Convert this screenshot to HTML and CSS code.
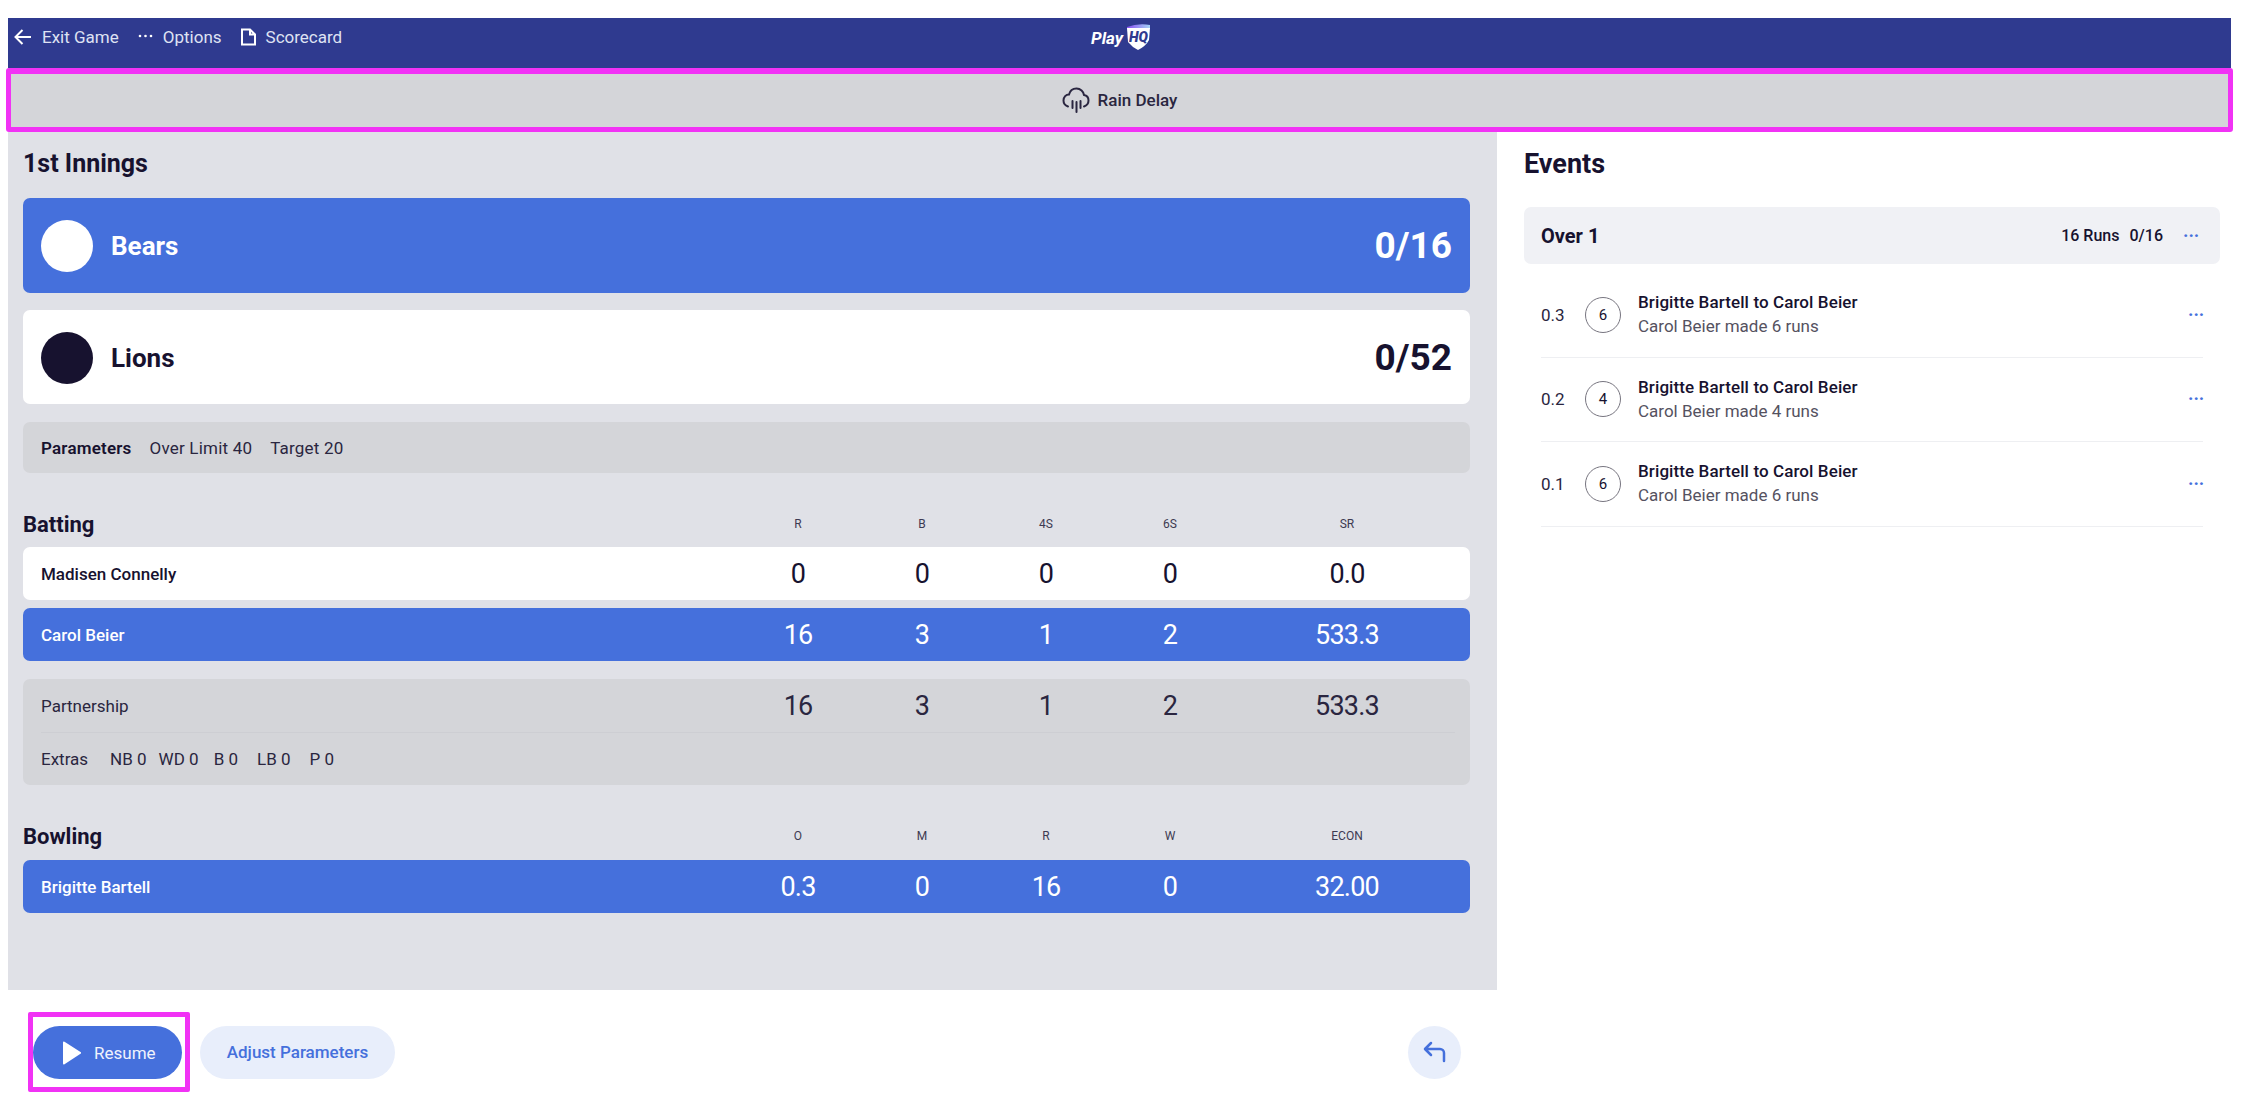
FILE: index.html
```html
<!DOCTYPE html>
<html lang="en">

<head>
    <meta charset="UTF-8">
    <title>Scoring</title>
    <link rel="stylesheet" href="styles.css">
</head>

<body>
    <div class="app">
        <header class="topbar">
            <nav class="topnav">
                <a class="navitem">
                    <svg class="navicon" width="18" height="18" viewBox="0 0 18 18"><path d="M17 9H1.500M8.500 2L1.500 9l7 7" /></svg>
                    Exit Game
                </a>
                <a class="navitem">
                    <svg class="navicon" width="15" height="18" viewBox="0 0 15 18"><circle cx="2" cy="8" r="1.3" /><circle cx="7.500" cy="8" r="1.3" /><circle cx="13" cy="8" r="1.3" /></svg>
                    Options
                </a>
                <a class="navitem">
                    <svg class="navicon" width="15" height="18" viewBox="0 0 15 18"><path d="M1 1.500h8l5 5V16.500H1zM9 1.500v5h5" /></svg>
                    Scorecard
                </a>
            </nav>
            <div class="logo">
                <span class="logo-play">Play</span>
                <svg class="logo-shield" width="27" height="28" viewBox="0 0 27 28">
                    <defs>
                        <linearGradient id="shieldtop" x1="0" y1="0" x2="1" y2="0">
                            <stop offset="0" stop-color="#8a4ff0" />
                            <stop offset="1" stop-color="#a5d4f7" />
                        </linearGradient>
                    </defs>
                    <path d="M3 4Q14 0 26 2L26 6H3z" fill="url(#shieldtop)" />
                    <path d="M3 5H26L25 17Q22 23 14 27Q8 24 4 19z" fill="#fff" />
                </svg>
                <span class="logo-hq">HQ</span>
            </div>
        </header>

        <div class="delay">
            <svg class="delay-icon" width="28" height="28" viewBox="0 0 28 28"><path d="M6 20.500C3 19.500 1.500 17 1.500 14.500C1.500 11 4 8.500 7 8.500C8 4.500 11 2.500 14.500 2.500C18.500 2.500 21.500 5.500 22 9C25 9.500 26.500 12 26.500 14.500C26.500 17 25 19.500 22 20.500M10.500 15v7M14.500 16v10M18.500 15v7" /></svg>
            Rain Delay
        </div>

        <div class="columns">
            <div class="leftcol">
                <main class="game">
                    <h2 class="innings">1st Innings</h2>

                    <div class="team team-active">
                        <span class="badge badge-white"></span>
                        <span class="team-name">Bears</span>
                        <span class="team-score">0/16</span>
                    </div>
                    <div class="team team-plain">
                        <span class="badge badge-dark"></span>
                        <span class="team-name">Lions</span>
                        <span class="team-score">0/52</span>
                    </div>

                    <div class="params">
                        <b>Parameters</b>
                        <span>Over Limit 40</span>
                        <span>Target 20</span>
                    </div>

                    <div class="stat-head stat-head-batting">
                        <h3>Batting</h3>
                        <span>R</span><span>B</span><span>4S</span><span>6S</span><span>SR</span>
                    </div>
                    <div class="stat-row row-white">
                        <div class="player">Madisen Connelly</div>
                        <span>0</span><span>0</span><span>0</span><span>0</span><span>0.0</span>
                    </div>
                    <div class="stat-row row-blue">
                        <div class="player">Carol Beier</div>
                        <span>16</span><span>3</span><span>1</span><span>2</span><span>533.3</span>
                    </div>

                    <div class="partner">
                        <div class="stat-row partner-row">
                            <div class="partner-name">Partnership</div>
                            <span>16</span><span>3</span><span>1</span><span>2</span><span>533.3</span>
                        </div>
                        <div class="extras">
                            <span class="ex-label">Extras</span>
                            <span class="ex-nb">NB 0</span>
                            <span class="ex-wd">WD 0</span>
                            <span class="ex-b">B 0</span>
                            <span class="ex-lb">LB 0</span>
                            <span>P 0</span>
                        </div>
                    </div>

                    <div class="stat-head stat-head-bowling">
                        <h3>Bowling</h3>
                        <span>O</span><span>M</span><span>R</span><span>W</span><span>ECON</span>
                    </div>
                    <div class="stat-row row-blue">
                        <div class="player">Brigitte Bartell</div>
                        <span>0.3</span><span>0</span><span>16</span><span>0</span><span>32.00</span>
                    </div>
                </main>

                <footer class="actions">
                    <div class="resume-box">
                        <button class="btn btn-primary">
                            <svg width="20" height="24" viewBox="0 0 20 24"><path d="M1 1.500a1 1 0 0 1 1.500 -.8L18.500 11a1 1 0 0 1 0 1.800L2.500 23.300a1 1 0 0 1 -1.500 -.8z" fill="#fff" /></svg>
                            Resume
                        </button>
                    </div>
                    <button class="btn btn-soft">Adjust Parameters</button>
                    <button class="btn-undo">
                        <svg width="24" height="24" viewBox="0 0 24 24"><path d="M8 3L2 9l6 6M2.500 9H17a4 4 0 0 1 4 4v8" /></svg>
                    </button>
                </footer>
            </div>

            <aside class="events">
                <h2 class="events-title">Events</h2>
                <div class="over">
                    <span class="over-name">Over 1</span>
                    <span class="over-runs">16 Runs</span>
                    <span class="over-score">0/16</span>
                    <span class="dots">···</span>
                </div>
                <div class="event">
                    <span class="ball">0.3</span>
                    <span class="ring">6</span>
                    <div class="event-text">
                        <div class="event-title">Brigitte Bartell to Carol Beier</div>
                        <div class="event-sub">Carol Beier made 6 runs</div>
                    </div>
                    <span class="dots">···</span>
                </div>
                <div class="event">
                    <span class="ball">0.2</span>
                    <span class="ring">4</span>
                    <div class="event-text">
                        <div class="event-title">Brigitte Bartell to Carol Beier</div>
                        <div class="event-sub">Carol Beier made 4 runs</div>
                    </div>
                    <span class="dots">···</span>
                </div>
                <div class="event">
                    <span class="ball">0.1</span>
                    <span class="ring">6</span>
                    <div class="event-text">
                        <div class="event-title">Brigitte Bartell to Carol Beier</div>
                        <div class="event-sub">Carol Beier made 6 runs</div>
                    </div>
                    <span class="dots">···</span>
                </div>
            </aside>
        </div>
    </div>
</body>

</html>
```
FILE: styles.css
```css
* {
    margin: 0;
    padding: 0;
    box-sizing: border-box;
}

body {
    background: #fff;
    color: #17122f;
    font-family: Roboto, "Liberation Sans", sans-serif;
    overflow: hidden;
}

.app {
    width: 2246px;
    height: 1110px;
    padding: 18px 15px 0 8px;
}

/* top bar */
.topbar {
    height: 50px;
    background: #2f3a8f;
    color: #dfe2f3;
    display: flex;
    align-items: flex-start;
    position: relative;
}

.topnav {
    display: flex;
    padding: 9px 0 0 6px;
    gap: 19px;
    font-size: 17px;
    line-height: 20px;
}

.navitem {
    display: flex;
    align-items: center;
    gap: 10px;
}

.navicon {
    fill: none;
    stroke: #fff;
    stroke-width: 2;
}

.navicon circle {
    fill: #fff;
    stroke: none;
}

.logo {
    position: absolute;
    left: 1083px;
    top: 5px;
    display: flex;
    color: #fff;
    font-weight: 700;
    font-style: italic;
}

.logo-play {
    font-size: 17px;
    line-height: 30px;
}

.logo-shield {
    margin-left: 1px;
}

.logo-hq {
    position: absolute;
    right: 3px;
    top: 6px;
    color: #2f3a8f;
    font-size: 14px;
    line-height: 16px;
    font-weight: 900;
}

/* rain delay strip */
.delay {
    height: 64px;
    margin: 0 -2px;
    padding-bottom: 2px;
    background: #d4d5d9;
    border: 5px solid #f132f5;
    border-top-width: 6px;
    border-radius: 3px;
    display: flex;
    align-items: center;
    justify-content: center;
    gap: 8px;
    font-size: 17px;
    font-weight: 500;
    color: #2a2640;
}

.delay-icon {
    fill: none;
    stroke: #2a2640;
    stroke-width: 2;
    stroke-linecap: round;
}

.columns {
    display: flex;
}

.leftcol {
    width: 1489px;
}

/* game panel */
.game {
    height: 858px;
    background: #e0e1e7;
    padding: 15px 27px 0 15px;
}

.innings {
    font-size: 25px;
    line-height: 34px;
    font-weight: 700;
    margin-bottom: 17px;
}

.team {
    display: flex;
    align-items: center;
    border-radius: 7px;
    padding: 0 18px;
    margin-bottom: 18px;
}

.team-active {
    height: 95px;
    margin-bottom: 17px;
    background: #4570dc;
    color: #fff;
}

.team-plain {
    height: 94px;
    padding-top: 1px;
    background: #fff;
}

.badge {
    width: 52px;
    height: 52px;
    border-radius: 50%;
    margin-right: 18px;
}

.badge-white {
    background: #fff;
}

.badge-dark {
    background: #17122f;
}

.team-name {
    font-size: 26px;
    font-weight: 700;
    flex: 1;
}

.team-score {
    font-size: 37px;
    font-weight: 700;
}

.params {
    height: 51px;
    background: #d4d5d9;
    border-radius: 7px;
    padding: 0 18px;
    display: flex;
    align-items: center;
    gap: 18px;
    font-size: 17px;
    letter-spacing: .2px;
    color: #2a2640;
}

.params b {
    font-weight: 600;
    color: #17122f;
}

/* stat tables, the last column is wider */
.stat-head,
.stat-row {
    display: grid;
    grid-template-columns: 1fr 124px 124px 124px 124px 230px;
    align-items: center;
    text-align: center;
    padding-right: 8px;
}

.stat-head {
    height: 36px;
    font-size: 12px;
    color: #3d3a52;
}

.stat-head-batting {
    margin-top: 33px;
    margin-bottom: 5px;
}

.stat-head-bowling {
    margin-top: 33px;
    margin-bottom: 6px;
}

.stat-head h3 {
    text-align: left;
    font-size: 22px;
    font-weight: 700;
    color: #17122f;
}

.stat-row {
    height: 53px;
    border-radius: 7px;
    font-size: 27px;
    letter-spacing: -.8px;
    margin-bottom: 8px;
}

.player,
.partner-name {
    text-align: left;
    padding-left: 18px;
    font-size: 17px;
    font-weight: 500;
    letter-spacing: 0;
}

.row-white {
    background: #fff;
}

.row-blue {
    background: #4570dc;
    color: #fff;
}

.partner {
    height: 106px;
    margin-top: 18px;
    background: #d4d5d9;
    border-radius: 7px;
    color: #2a2640;
}

.partner-row {
    margin-bottom: 0;
}

.partner-name {
    font-weight: 400;
}

.extras {
    margin: 0 15px 0 18px;
    height: 53px;
    border-top: 1px solid #cdced3;
    display: flex;
    align-items: center;
    font-size: 17px;
}

.ex-label {
    margin-right: 22px;
}

.ex-b,
.ex-lb {
    margin-right: 19px;
}

.ex-nb {
    margin-right: 12px;
}

.ex-wd {
    margin-right: 15px;
}

/* footer buttons */
.actions {
    height: 120px;
    display: flex;
    align-items: center;
    padding: 4px 36px 0 20px;
    gap: 10px;
}

.resume-box {
    border: 5px solid #f132f5;
    border-radius: 2px;
    padding: 9px 3px 8px 0;
}

.btn {
    height: 53px;
    border: 0;
    border-radius: 27px;
    font-family: inherit;
    font-size: 17px;
    display: flex;
    align-items: center;
}

.btn-primary {
    width: 149px;
    padding-left: 29px;
    gap: 12px;
    background: #4570dc;
    color: #f0f3fc;
}

.btn-soft {
    width: 195px;
    justify-content: center;
    background: #e8eefb;
    color: #4570dc;
    font-weight: 500;
}

.btn-undo {
    width: 53px;
    height: 53px;
    margin-left: auto;
    border: 0;
    border-radius: 50%;
    background: #e8eefb;
    display: flex;
    align-items: center;
    justify-content: center;
}

.btn-undo svg {
    fill: none;
    stroke: #4570dc;
    stroke-width: 2.5;
    stroke-linecap: round;
    stroke-linejoin: round;
}

/* events column */
.events {
    flex: 1;
    padding: 15px 11px 0 27px;
}

.events-title {
    font-size: 27px;
    line-height: 34px;
    font-weight: 700;
    margin-bottom: 26px;
}

.over {
    height: 57px;
    background: #f0f1f5;
    border-radius: 7px;
    display: flex;
    align-items: center;
    padding: 0 22px 0 17px;
    font-size: 16px;
    font-weight: 500;
    margin-bottom: 9px;
}

.over-name {
    flex: 1;
    font-size: 20px;
    font-weight: 700;
}

.over-score {
    margin-left: 10px;
}

.dots {
    color: #4570dc;
    font-size: 18px;
    font-weight: 700;
    line-height: 16px;
    margin-left: 20px;
    width: 15px;
}

.event {
    height: 84.5px;
    margin: 0 17px;
    border-bottom: 1px solid #eeeff2;
    display: flex;
    align-items: center;
}

.ball {
    width: 44px;
    font-size: 17px;
    color: #2a2640;
}

.ring {
    width: 36px;
    height: 36px;
    border: 1px solid #77757f;
    border-radius: 50%;
    display: flex;
    align-items: center;
    justify-content: center;
    font-size: 15px;
    margin-right: 17px;
}

.event-text {
    flex: 1;
    padding-top: 1px;
}

.event-title {
    font-size: 17px;
    font-weight: 500;
    letter-spacing: .1px;
    line-height: 22px;
}

.event-sub {
    font-size: 17px;
    line-height: 26px;
    color: #55525f;
}
```
